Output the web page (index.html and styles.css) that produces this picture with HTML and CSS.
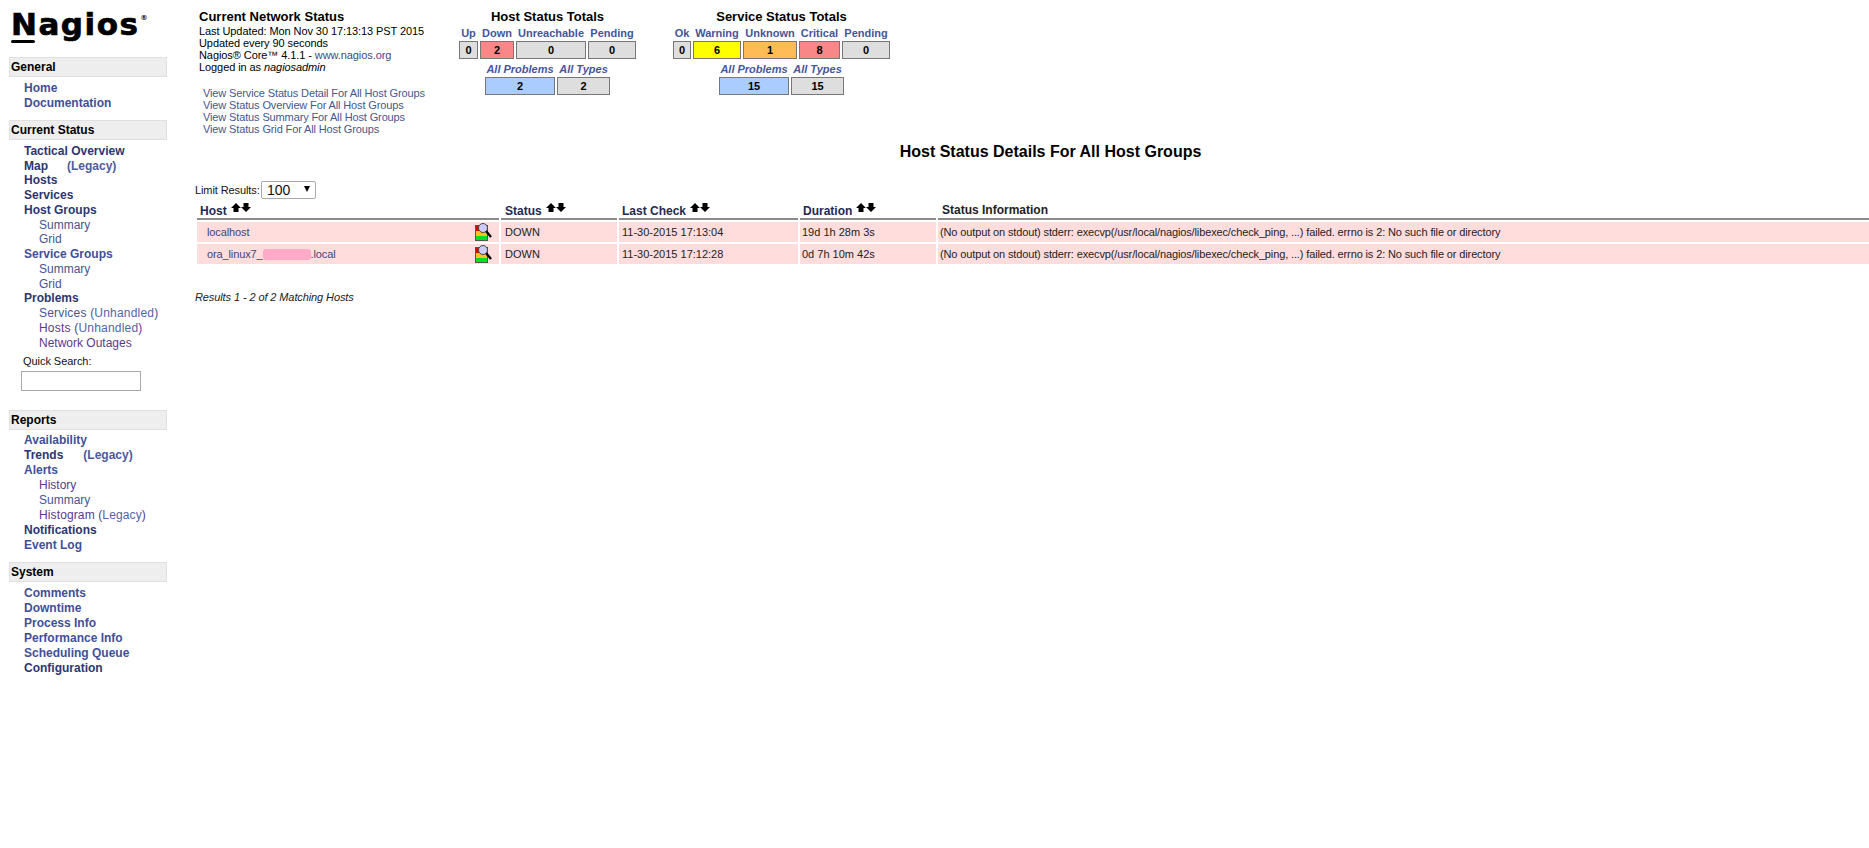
FILE: index.html
```html
<!DOCTYPE html>
<html lang="en">
<head>
<meta charset="utf-8">
<title>Nagios Core</title>
<link rel="stylesheet" href="styles.css">
</head>
<body>
<svg class="defs" width="0" height="0" aria-hidden="true">
  <symbol id="up" viewBox="0 0 10 10"><polygon points="5,0 10,5 7.5,5 7.5,9 2.5,9 2.5,5 0,5"/></symbol>
  <symbol id="down" viewBox="0 0 10 10"><polygon points="5,9 10,4 7.5,4 7.5,0 2.5,0 2.5,4 0,4"/></symbol>
  <symbol id="ext" viewBox="0 0 17 18">
    <rect x="0.5" y="2.5" width="12" height="15" fill="#fff" stroke="#555"/>
    <rect x="1" y="3" width="3" height="5" fill="#e00000"/>
    <rect x="1" y="8" width="11" height="5" fill="#ffc020"/>
    <rect x="1" y="13" width="11" height="4" fill="#00e020"/>
    <line x1="11" y1="8" x2="16" y2="14" stroke="#000" stroke-width="2.4"/>
    <circle cx="8" cy="5" r="4.5" fill="#ccccff" stroke="#444"/>
  </symbol>
</svg>
<div class="page">
  <aside class="sidebar">
    <div class="logo"><span class="logo-n">N</span>agios<span class="logo-r">®</span></div>

    <h2 class="nav-head">General</h2>
    <ul class="nav nav-even nav-general">
      <li><a class="top-link" href="#">Home</a></li>
      <li><a class="top-link" href="#">Documentation</a></li>
    </ul>

    <h2 class="nav-head">Current Status</h2>
    <ul class="nav nav-current">
      <li><a class="top-link dark" href="#">Tactical Overview</a></li>
      <li><a class="top-link dark" href="#">Map</a><a class="legacy map-legacy" href="#">(Legacy)</a></li>
      <li><a class="top-link dark" href="#">Hosts</a></li>
      <li><a class="top-link dark" href="#">Services</a></li>
      <li><a class="top-link dark" href="#">Host Groups</a></li>
      <li><a class="sub-link" href="#">Summary</a></li>
      <li><a class="sub-link" href="#">Grid</a></li>
      <li><a class="top-link" href="#">Service Groups</a></li>
      <li><a class="sub-link" href="#">Summary</a></li>
      <li><a class="sub-link" href="#">Grid</a></li>
      <li><a class="top-link dark" href="#">Problems</a></li>
      <li><a class="sub-link wide" href="#">Services (<span class="light">Unhandled</span>)</a></li>
      <li><a class="sub-link purple wide" href="#">Hosts (<span class="light">Unhandled</span>)</a></li>
      <li><a class="sub-link purple" href="#">Network Outages</a></li>
    </ul>
    <label class="search-label" for="quick">Quick Search:</label>
    <input class="search" id="quick" type="text">

    <h2 class="nav-head">Reports</h2>
    <ul class="nav nav-reports">
      <li><a class="top-link" href="#">Availability</a></li>
      <li><a class="top-link dark" href="#">Trends</a><a class="legacy trends-legacy" href="#">(Legacy)</a></li>
      <li><a class="top-link" href="#">Alerts</a></li>
      <li><a class="sub-link purple" href="#">History</a></li>
      <li><a class="sub-link" href="#">Summary</a></li>
      <li><a class="sub-link purple wide-sm" href="#">Histogram (<span class="light">Legacy</span>)</a></li>
      <li><a class="top-link dark" href="#">Notifications</a></li>
      <li><a class="top-link" href="#">Event Log</a></li>
    </ul>

    <h2 class="nav-head">System</h2>
    <ul class="nav nav-even">
      <li><a class="top-link" href="#">Comments</a></li>
      <li><a class="top-link" href="#">Downtime</a></li>
      <li><a class="top-link" href="#">Process Info</a></li>
      <li><a class="top-link" href="#">Performance Info</a></li>
      <li><a class="top-link" href="#">Scheduling Queue</a></li>
      <li><a class="top-link dark" href="#">Configuration</a></li>
    </ul>
  </aside>

  <main class="main">
    <section class="top">
      <div class="info">
        <div class="info-title">Current Network Status</div>
        <div class="info-line">Last Updated: Mon Nov 30 17:13:13 PST 2015</div>
        <div class="info-line">Updated every 90 seconds</div>
        <div class="info-line">Nagios® Core™ 4.1.1 - <a class="plain" href="#">www.nagios.org</a></div>
        <div class="info-line">Logged in as <i>nagiosadmin</i></div>
        <ul class="views">
          <li><a href="#">View Service Status Detail For All Host Groups</a></li>
          <li><a href="#">View Status Overview For All Host Groups</a></li>
          <li><a href="#">View Status Summary For All Host Groups</a></li>
          <li><a href="#">View Status Grid For All Host Groups</a></li>
        </ul>
      </div>

      <div class="totals host-totals">
        <div class="totals-title">Host Status Totals</div>
        <div class="tot-grid host-cols">
          <a class="lbl" href="#">Up</a><a class="lbl" href="#">Down</a><a class="lbl" href="#">Unreachable</a><a class="lbl" href="#">Pending</a>
          <div class="box">0</div><div class="box red">2</div><div class="box">0</div><div class="box">0</div>
        </div>
        <div class="tot-grid sum-cols">
          <a class="lbl ital" href="#">All Problems</a><a class="lbl ital" href="#">All Types</a>
          <div class="box blue">2</div><div class="box">2</div>
        </div>
      </div>

      <div class="totals service-totals">
        <div class="totals-title">Service Status Totals</div>
        <div class="tot-grid service-cols">
          <a class="lbl" href="#">Ok</a><a class="lbl" href="#">Warning</a><a class="lbl" href="#">Unknown</a><a class="lbl" href="#">Critical</a><a class="lbl" href="#">Pending</a>
          <div class="box">0</div><div class="box yellow">6</div><div class="box orange">1</div><div class="box red">8</div><div class="box">0</div>
        </div>
        <div class="tot-grid sum-cols">
          <a class="lbl ital" href="#">All Problems</a><a class="lbl ital" href="#">All Types</a>
          <div class="box blue">15</div><div class="box">15</div>
        </div>
      </div>
    </section>

    <h1 class="page-title">Host Status Details For All Host Groups</h1>

    <div class="limit">
      <label class="limit-label" for="lim">Limit Results:</label>
      <span class="select-wrap">
        <select id="lim"><option>100</option></select>
      </span>
    </div>

    <table class="status">
      <colgroup>
        <col class="c-host"><col class="c-status"><col class="c-check"><col class="c-dur"><col>
      </colgroup>
      <thead>
        <tr>
          <th>Host<span class="sort"><svg><use href="#up"/></svg><svg><use href="#down"/></svg></span></th>
          <th class="th-status">Status<span class="sort"><svg><use href="#up"/></svg><svg><use href="#down"/></svg></span></th>
          <th>Last Check<span class="sort"><svg><use href="#up"/></svg><svg><use href="#down"/></svg></span></th>
          <th>Duration<span class="sort"><svg><use href="#up"/></svg><svg><use href="#down"/></svg></span></th>
          <th class="th-info">Status Information</th>
        </tr>
      </thead>
      <tbody>
        <tr>
          <td class="td-host"><div class="host-cell"><a href="#">localhost</a><svg class="ext"><use href="#ext"/></svg></div></td>
          <td class="td-status">DOWN</td>
          <td class="td-check">11-30-2015 17:13:04</td>
          <td>19d 1h 28m 3s</td>
          <td class="td-info">(No output on stdout) stderr: execvp(/usr/local/nagios/libexec/check_ping, ...) failed. errno is 2: No such file or directory</td>
        </tr>
        <tr>
          <td class="td-host"><div class="host-cell"><a href="#">ora_linux7_<span class="scrub"></span>.local</a><svg class="ext"><use href="#ext"/></svg></div></td>
          <td class="td-status">DOWN</td>
          <td class="td-check">11-30-2015 17:12:28</td>
          <td>0d 7h 10m 42s</td>
          <td class="td-info">(No output on stdout) stderr: execvp(/usr/local/nagios/libexec/check_ping, ...) failed. errno is 2: No such file or directory</td>
        </tr>
      </tbody>
    </table>

    <p class="results">Results 1 - 2 of 2 Matching Hosts</p>
  </main>
</div>
</body>
</html>
```

FILE: styles.css
```css
* { box-sizing: border-box; }
html, body { margin: 0; padding: 0; background: #fff; overflow-x: hidden; }
body { font-family: "Liberation Sans", Arial, sans-serif; font-size: 11px; color: #000; }
a { text-decoration: none; color: #3f4f99; }
ul { list-style: none; margin: 0; padding: 0; }
.defs { position: absolute; }
.page { display: flex; align-items: flex-start; }

/* Sidebar */
.sidebar { width: 190px; flex: none; padding-left: 9px; }
.logo { position: relative; height: 57px; padding: 6px 0 0 2px; font-family: "DejaVu Sans", sans-serif; font-weight: bold; font-size: 31px; line-height: 36px; letter-spacing: 1.5px; color: #000; -webkit-text-stroke: 0.7px #000; }
.logo-n { position: relative; display: inline-block; }
.logo-n::after { content: ""; position: absolute; left: 0; right: 3px; top: 34px; height: 3px; border-radius: 2px; background: #000; }
.logo-r { font-size: 7px; -webkit-text-stroke: 0; letter-spacing: 0; vertical-align: 15px; margin-left: 1px; line-height: 0; }
.nav-head { margin: 0; width: 158px; height: 20px; padding-left: 1px; border: 1px solid #e0e0e0; background: #eeeeee; font-size: 12px; font-weight: bold; line-height: 18px; }
.nav { padding-top: 3.5px; margin-bottom: 10px; line-height: 14.75px; font-size: 12px; }
.nav-even { line-height: 15px; }
.nav-general { margin-bottom: 9.5px; }
.nav-current { padding-top: 3.8px; margin-bottom: 9.7px; }
.nav-reports { line-height: 14.9px; margin-bottom: 9.3px; }
.top-link { margin-left: 15px; font-weight: bold; }
.dark { color: #2c3670; }
.sub-link { margin-left: 30px; color: #47558f; }
.purple { color: #5a3a8c; }
.light { color: #5464a8; }
.wide { letter-spacing: 0.2px; }
.wide-sm { letter-spacing: 0.12px; }
.legacy { font-weight: bold; color: #4e5aa0; }
.map-legacy { margin-left: 19px; }
.trends-legacy { margin-left: 20px; }
.search-label { display: block; margin: -6px 0 3px 14px; font-size: 11px; line-height: 14px; color: #111; letter-spacing: -0.05px; }
.search { display: block; width: 120px; height: 20px; margin: 0 0 19px 12px; padding: 0; border: 1px solid #a9a9a9; background: #fff; }

/* Main */
.main { flex: 1; min-width: 0; padding-left: 5px; }
.top { display: flex; align-items: flex-start; padding-top: 10px; }
.info { width: 260px; flex: none; margin-left: 4px; }
.info-title { font-size: 13px; font-weight: bold; line-height: 14px; margin-bottom: 1px; white-space: nowrap; }
.info-line { line-height: 12px; letter-spacing: -0.08px; }
.plain { color: #3d4a80; }
.views { margin: 14px 0 0 4px; line-height: 12px; letter-spacing: -0.13px; }
.views a { color: #46568f; }

.totals { flex: none; display: flex; flex-direction: column; align-items: center; }
.host-totals { width: 177px; }
.service-totals { width: 217px; margin-left: 37px; }
.totals-title { font-size: 13px; font-weight: bold; line-height: 14px; margin-bottom: 3px; }
.tot-grid { display: grid; column-gap: 2px; row-gap: 2px; grid-template-rows: 12px 18px; }
.host-cols { grid-template-columns: 19px 34px 70px 48px; }
.service-cols { grid-template-columns: 18px 48px 54px 41px 48px; }
.sum-cols { grid-template-columns: 70px 53px; margin-top: 4px; }
.lbl { font-size: 11px; font-weight: bold; line-height: 12px; text-align: center; white-space: nowrap; color: #46559a; }
.ital { font-style: italic; justify-self: center; }
.box { border: 1px solid #777; background: #dedede; font-size: 11px; font-weight: bold; line-height: 16px; text-align: center; }
.red { background: #f88888; }
.yellow { background: #ffff00; }
.orange { background: #ffbb55; }
.blue { background: #aaccff; }

.page-title { margin: 9px 0 0; padding-left: 37px; font-size: 16px; font-weight: bold; line-height: 16px; text-align: center; }

.limit { display: flex; align-items: center; margin-top: 21px; height: 18px; font-size: 11px; color: #111; }
.limit-label { width: 66px; flex: none; letter-spacing: -0.1px; white-space: nowrap; }
.select-wrap { position: relative; display: block; width: 55px; height: 18px; }
.select-wrap::after { content: ""; position: absolute; right: 6px; top: 5px; border-left: 3.5px solid transparent; border-right: 3.5px solid transparent; border-top: 6px solid #000; pointer-events: none; }
.select-wrap select { appearance: none; display: block; width: 100%; height: 100%; margin: 0; padding: 0 0 0 5px; border: 1px solid #aaa; border-radius: 2px; background: #fff; font-family: "Liberation Sans", Arial, sans-serif; font-size: 14px; color: #111; }

.status { width: calc(100% + 2px); table-layout: fixed; border-collapse: separate; border-spacing: 2px; margin: 0; }
.c-host { width: 302px; }
.c-status { width: 116px; }
.c-check { width: 179px; }
.c-dur { width: 136px; }
.status th { height: 19px; padding: 0 0 0 3px; border-bottom: 2px solid #8a8a8a; font-size: 12px; line-height: 14px; text-align: left; vertical-align: bottom; white-space: nowrap; color: #222a50; }
.status .th-status { padding-left: 4px; }
.status .th-info { padding-left: 4px; padding-bottom: 1px; color: #222; }
.sort { margin-left: 4px; }
.sort svg { display: inline-block; width: 10px; height: 10px; vertical-align: 2px; fill: #000; }
.status td { height: 20px; padding: 0 0 0 2px; background: #ffdddd; font-size: 11px; line-height: 14px; white-space: nowrap; color: #222; }
.status .td-host { padding: 0 7px 0 10px; }
.status .td-status { padding-left: 4px; }
.status .td-check { padding-left: 3px; }
.status .td-info { letter-spacing: -0.13px; }
.host-cell { display: flex; align-items: center; justify-content: space-between; }
.host-cell a { color: #3a4678; letter-spacing: -0.12px; }
.ext { width: 17px; height: 18px; flex: none; }
.scrub { display: inline-block; width: 48px; height: 11px; vertical-align: -2px; background: #ffaac8; border-radius: 3px; }

.results { margin: 25px 0 0; font-size: 11px; font-style: italic; line-height: 12px; letter-spacing: -0.1px; color: #222; }
```
